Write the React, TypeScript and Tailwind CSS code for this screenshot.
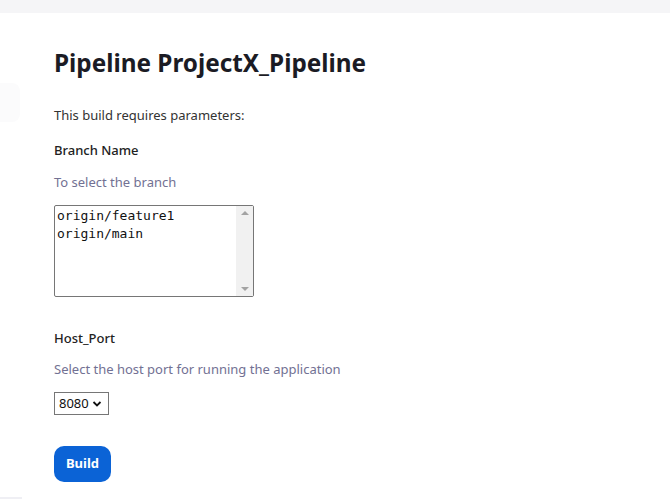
const App = () => {
  const branches = ["origin/feature1", "origin/main"];
  return (
    <div className="relative w-[670px] h-[500px] bg-white overflow-hidden font-['Noto_Sans',sans-serif] text-[#1b1b24]">
      <div className="h-[13px] bg-[#f5f5f7]" />
      {/* faint side panel edge */}
      <div className="absolute left-0 top-[83px] w-[20px] h-[39px] rounded-r-lg bg-[#fbfbfc]" />
      <div className="absolute left-0 bottom-[1px] w-[22px] h-[2px] bg-[#efeff4]" />

      <div className="pl-[54px] pt-[34px]">
        <h1 className="text-[24.3px] leading-[32px] font-bold">
          Pipeline ProjectX_Pipeline
        </h1>
        <p className="mt-[26px] text-[13px] leading-[20px] text-[#333]">
          This build requires parameters:
        </p>

        <div className="mt-[15px]">
          <div className="text-[13px] leading-[20px] font-medium text-[#222]">
            Branch Name
          </div>
          <div className="mt-[12px] text-[13px] leading-[20px] text-[#727193]">
            To select the branch
          </div>
          <div className="mt-[13px] w-[200px] h-[92px] border border-[#767676] rounded-[2px] flex">
            <div className="flex-1 pl-[2px] pt-[1px] font-['DejaVu_Sans_Mono',monospace] text-[13px] leading-[18px] text-[#111]">
              {branches.map((b, i) => (
                <div key={i}>{b}</div>
              ))}
            </div>
            <div className="w-[17px] bg-[#f1f1f1] flex flex-col justify-between items-center py-[5px]">
              <div className="w-0 h-0 border-l-[4px] border-r-[4px] border-b-[4px] border-l-transparent border-r-transparent border-b-[#a3a3a3]" />
              <div className="w-0 h-0 border-l-[4px] border-r-[4px] border-t-[4px] border-l-transparent border-r-transparent border-t-[#a3a3a3]" />
            </div>
          </div>
        </div>

        <div className="mt-[31px]">
          <div className="text-[13px] leading-[20px] font-medium text-[#222]">
            Host_Port
          </div>
          <div className="mt-[11px] text-[13px] leading-[20px] text-[#727193]">
            Select the host port for running the application
          </div>
          <div className="mt-[13px] w-[55px] h-[23px] border border-[#767676] flex items-center pl-[4px] gap-[3px] text-[13px] text-[#111]">
            <span>8080</span>
            <svg width="10" height="10" viewBox="0 0 10 10">
              <path d="M1.5 3 L5 6.5 L8.5 3" fill="none" stroke="#111" strokeWidth="1.8" />
            </svg>
          </div>
        </div>

        <button className="mt-[31px] w-[57px] h-[36px] rounded-[10px] bg-[#0b63d6] text-white text-[13px] font-bold">
          Build
        </button>
      </div>
    </div>
  );
};

export default App;
